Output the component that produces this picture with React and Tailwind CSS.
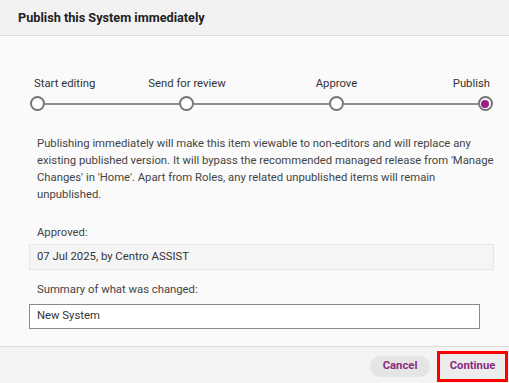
import React from 'react';

const font = { fontFamily: 'Roboto, "Liberation Sans", sans-serif' };

const Step = ({ active = false }) => (
  <div className="w-[15px] h-[15px] shrink-0 rounded-full border-2 border-[#757575] bg-white flex items-center justify-center">
    {active ? <div className="w-[8px] h-[8px] rounded-full bg-[#9b2188]" /> : null}
  </div>
);

const Line = () => <div className="flex-1 h-[2px] bg-[#8f8f8f]" />;

const App = () => {
  return (
    <div
      className="w-[509px] h-[383px] flex flex-col bg-[#fafafa] text-[#333] overflow-hidden"
      style={font}
    >
      <div className="h-[36px] shrink-0 flex items-center px-[18px] bg-[#f2f2f2] border-b border-[#dcdcdc]">
        <h1 className="text-[12.7px] font-bold text-[#222]">Publish this System immediately</h1>
      </div>

      <div className="flex-1 pl-[29px] pr-[15px] pt-[41px] text-[11.3px]">
        {/* stepper */}
        <div className="grid grid-cols-[83px_150px_149px_1fr] leading-[14px] text-[#333]">
          <div className="pl-[5px]">Start editing</div>
          <div className="text-center">Send for review</div>
          <div className="text-center">Approve</div>
          <div className="text-right pr-[4px]">Publish</div>
        </div>
        <div className="mt-[5px] flex items-center px-[1px]">
          <Step />
          <Line />
          <Step />
          <Line />
          <Step />
          <Line />
          <Step active />
        </div>

        <p className="mt-[24px] pl-[8px] leading-[17px] text-[#444]">
          Publishing immediately will make this item viewable to non-editors and will replace any
          existing published version. It will bypass the recommended managed release from 'Manage
          Changes' in 'Home'. Apart from Roles, any related unpublished items will remain
          unpublished.
        </p>

        <div className="mt-[21px] pl-[8px] leading-[17px] text-[#444]">Approved:</div>
        <div className="mt-[3px] h-[26px] flex items-center pl-[7px] bg-[#f5f5f5] border border-[#e6e6e6] text-[#333]">
          07 Jul 2025, by Centro ASSIST
        </div>

        <div className="mt-[11px] pl-[8px] leading-[17px] text-[#444]">
          Summary of what was changed:
        </div>
        <div className="mt-[6px] w-[451px] h-[25px] flex items-center pl-[7px] bg-white border border-[#8a8a8a] text-[#333]">
          New System
        </div>
      </div>

      <div className="h-[37px] shrink-0 flex items-center justify-end gap-[7px] pr-[1px] pt-[3px] bg-[#f3f3f3] border-t border-[#dcdcdc]">
        <button className="w-[60px] h-[21px] rounded-full bg-[#e5e5e5] text-[11.3px] font-bold text-[#8b2a80]">
          Cancel
        </button>
        <button className="w-[71px] h-[31px] border-[3px] border-[#ff0000] bg-[#ececec] text-[11.3px] font-bold text-[#8b2a80]">
          Continue
        </button>
      </div>
    </div>
  );
};

export default App;
